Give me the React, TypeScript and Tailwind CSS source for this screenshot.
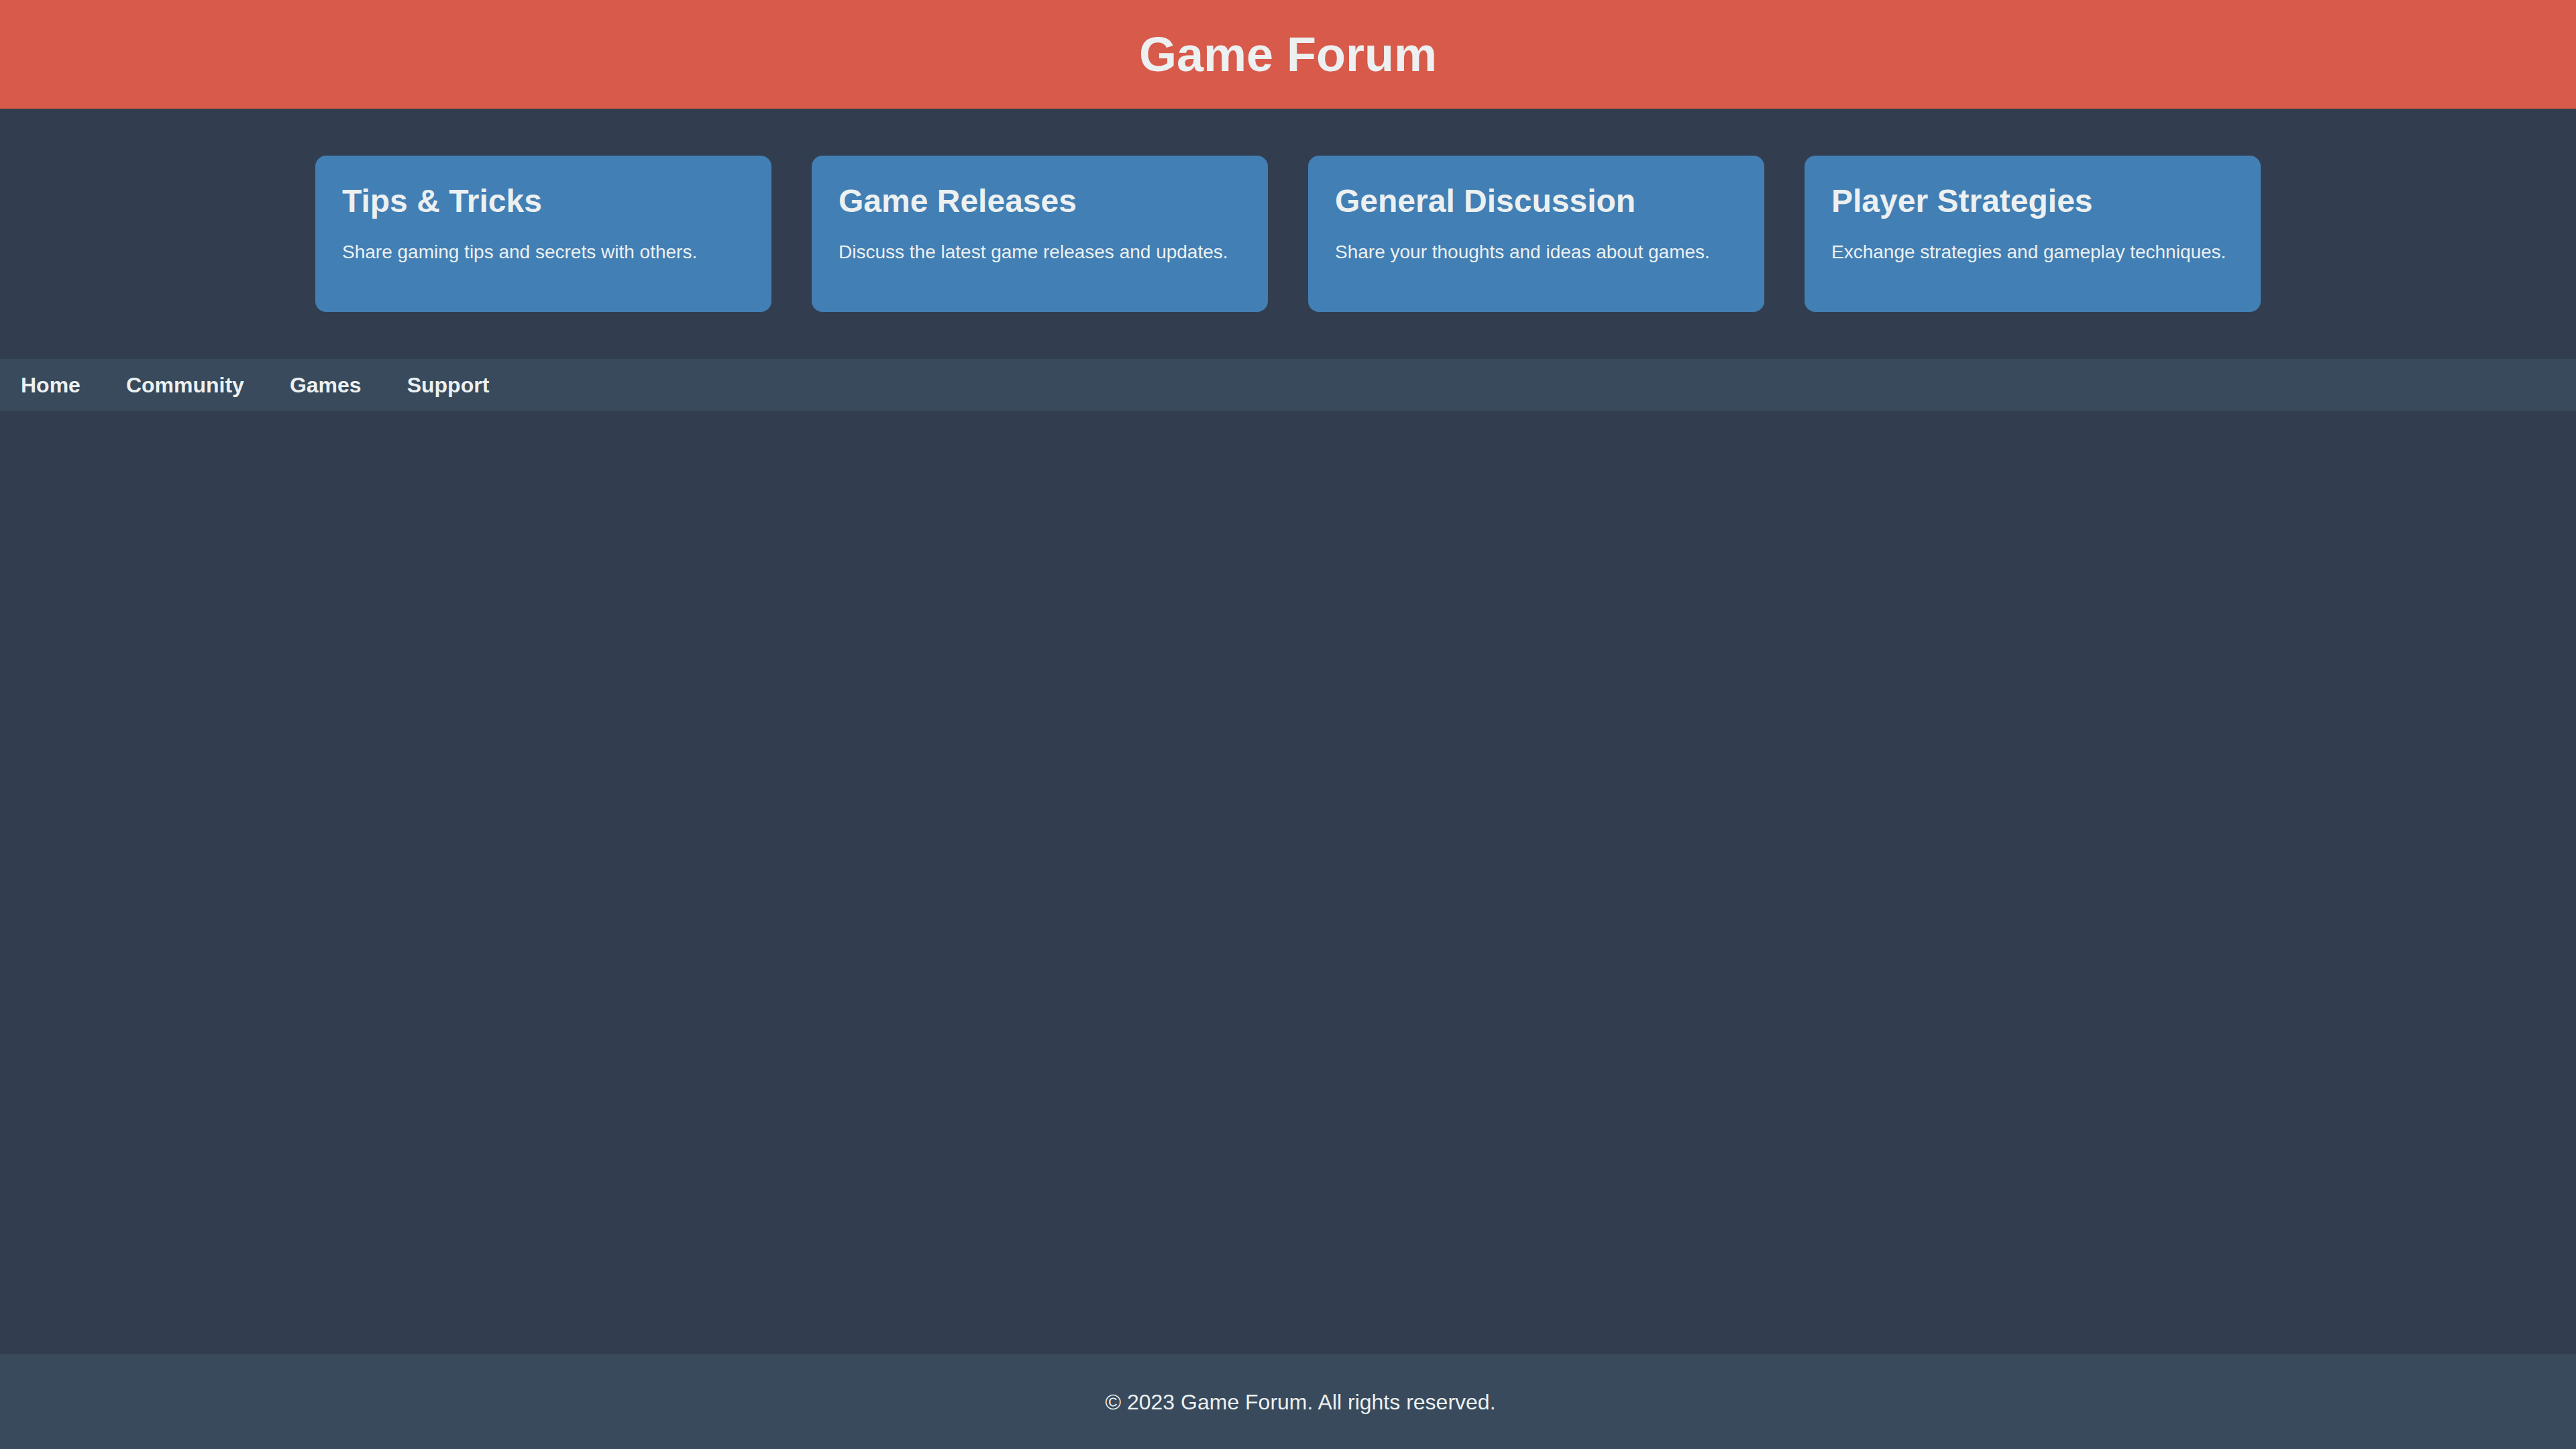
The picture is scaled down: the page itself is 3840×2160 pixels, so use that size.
import React from "react";

const cards = [
  { title: "Tips & Tricks", desc: "Share gaming tips and secrets with others." },
  { title: "Game Releases", desc: "Discuss the latest game releases and updates." },
  { title: "General Discussion", desc: "Share your thoughts and ideas about games." },
  { title: "Player Strategies", desc: "Exchange strategies and gameplay techniques." },
];

const links = ["Home", "Community", "Games", "Support"];

export default function App() {
  return (
    <div
      className="min-h-screen flex flex-col bg-[#323e50] text-[#ecf0f1]"
      style={{ fontFamily: '"Liberation Sans", Arial, sans-serif' }}
    >
      <header className="h-[162px] bg-[#d75a4a] flex items-center justify-center">
        <h1 className="text-[72px] font-bold leading-none">Game Forum</h1>
      </header>

      <section className="py-[70px] flex justify-center">
        <div className="w-[2900px] flex gap-[60px]">
          {cards.map((c) => (
            <div
              key={c.title}
              className="flex-1 h-[233px] bg-[#427fb4] rounded-[16px] px-[40px] pt-[41px]"
            >
              <h3 className="text-[48px] font-bold leading-[54px]">{c.title}</h3>
              <p className="mt-[33px] text-[28px] leading-[32px]">{c.desc}</p>
            </div>
          ))}
        </div>
      </section>

      <nav className="h-[77px] bg-[#384a5c] flex items-center pl-[31px] gap-[68px]">
        {links.map((l) => (
          <a key={l} href="#" className="text-[32px] font-bold leading-none">
            {l}
          </a>
        ))}
      </nav>

      <main className="flex-1" />

      <footer className="h-[141px] bg-[#384a5c] flex items-center justify-center">
        <p className="ml-[37px] text-[32px] leading-none">© 2023 Game Forum. All rights reserved.</p>
      </footer>
    </div>
  );
}
